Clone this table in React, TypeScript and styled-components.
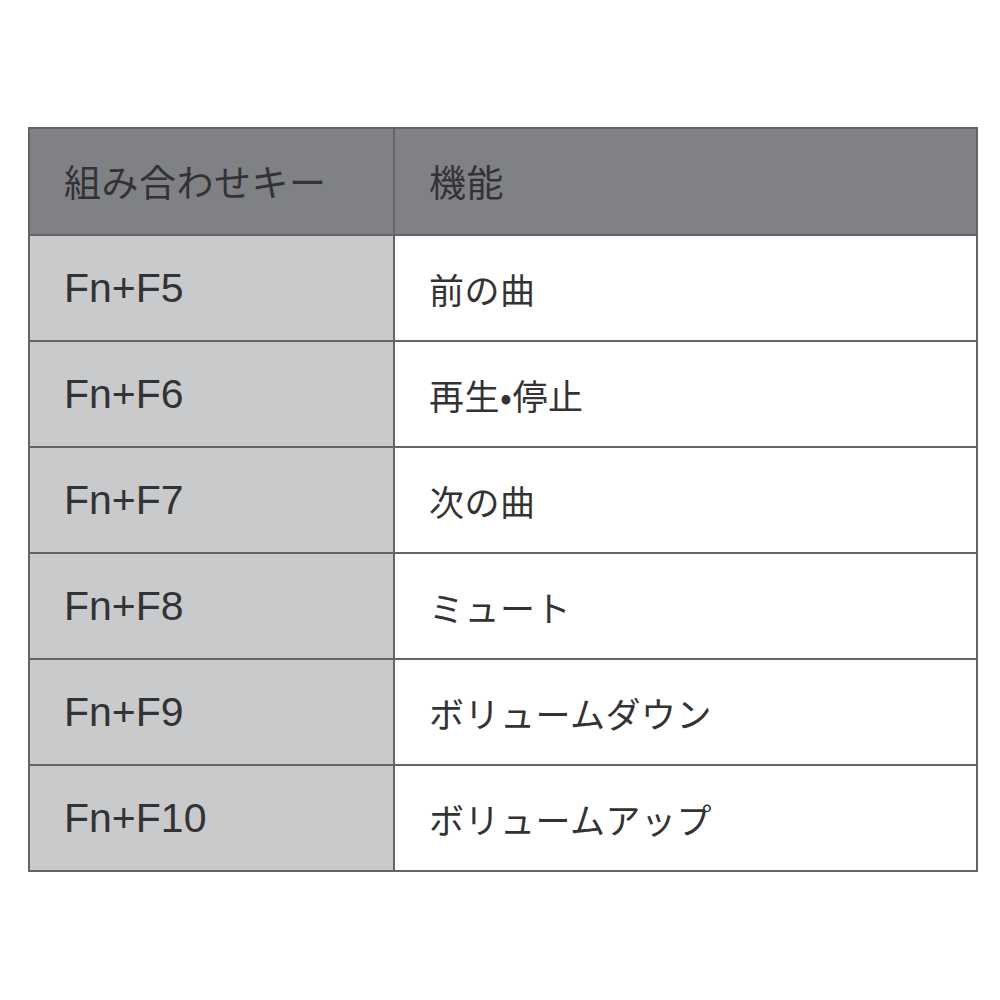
import React from "react";
import styled, { createGlobalStyle } from "styled-components";

const Global = createGlobalStyle`
  html, body { margin: 0; padding: 0; background: #ffffff; }
  body { font-family: "Liberation Sans", "Noto Sans CJK JP", sans-serif; }
`;

const Page = styled.div`
  width: 1000px;
  height: 1000px;
  padding: 127px 0 0 28px;
  box-sizing: border-box;
`;

const Table = styled.table`
  border-collapse: collapse;
  width: 950px;
  table-layout: fixed;
  border: 2px solid #646466;
  color: #333335;
`;

const Cell = styled.td<{ $head?: boolean; $key?: boolean }>`
  border: 2px solid #646466;
  height: ${(p) => (p.$head ? "107px" : "106px")};
  padding: 0 0 0 34px;
  box-sizing: border-box;
  vertical-align: middle;
  text-align: left;
  background: ${(p) => (p.$head ? "#808185" : p.$key ? "#c9cacc" : "#ffffff")};
  font-family: ${(p) =>
    p.$key && !p.$head
      ? `"Liberation Sans", "Noto Sans CJK JP", sans-serif`
      : `"Noto Sans CJK JP", sans-serif`};
  font-size: ${(p) => (p.$head ? "37px" : p.$key ? "41px" : "35px")};
  font-weight: 400;
  letter-spacing: ${(p) => (p.$key && !p.$head ? "0" : "0.5px")};
  line-height: 1;
  white-space: nowrap;
`;

const rows: [string, string][] = [
  ["Fn+F5", "前の曲"],
  ["Fn+F6", "再生•停止"],
  ["Fn+F7", "次の曲"],
  ["Fn+F8", "ミュート"],
  ["Fn+F9", "ボリュームダウン"],
  ["Fn+F10", "ボリュームアップ"],
];

export default function App() {
  return (
    <Page>
      <Global />
      <Table>
        <colgroup>
          <col style={{ width: "365px" }} />
          <col />
        </colgroup>
        <thead>
          <tr>
            <Cell as="th" $head $key>組み合わせキー</Cell>
            <Cell as="th" $head>機能</Cell>
          </tr>
        </thead>
        <tbody>
          {rows.map(([k, v]) => (
            <tr key={k}>
              <Cell $key>{k}</Cell>
              <Cell>{v}</Cell>
            </tr>
          ))}
        </tbody>
      </Table>
    </Page>
  );
}
